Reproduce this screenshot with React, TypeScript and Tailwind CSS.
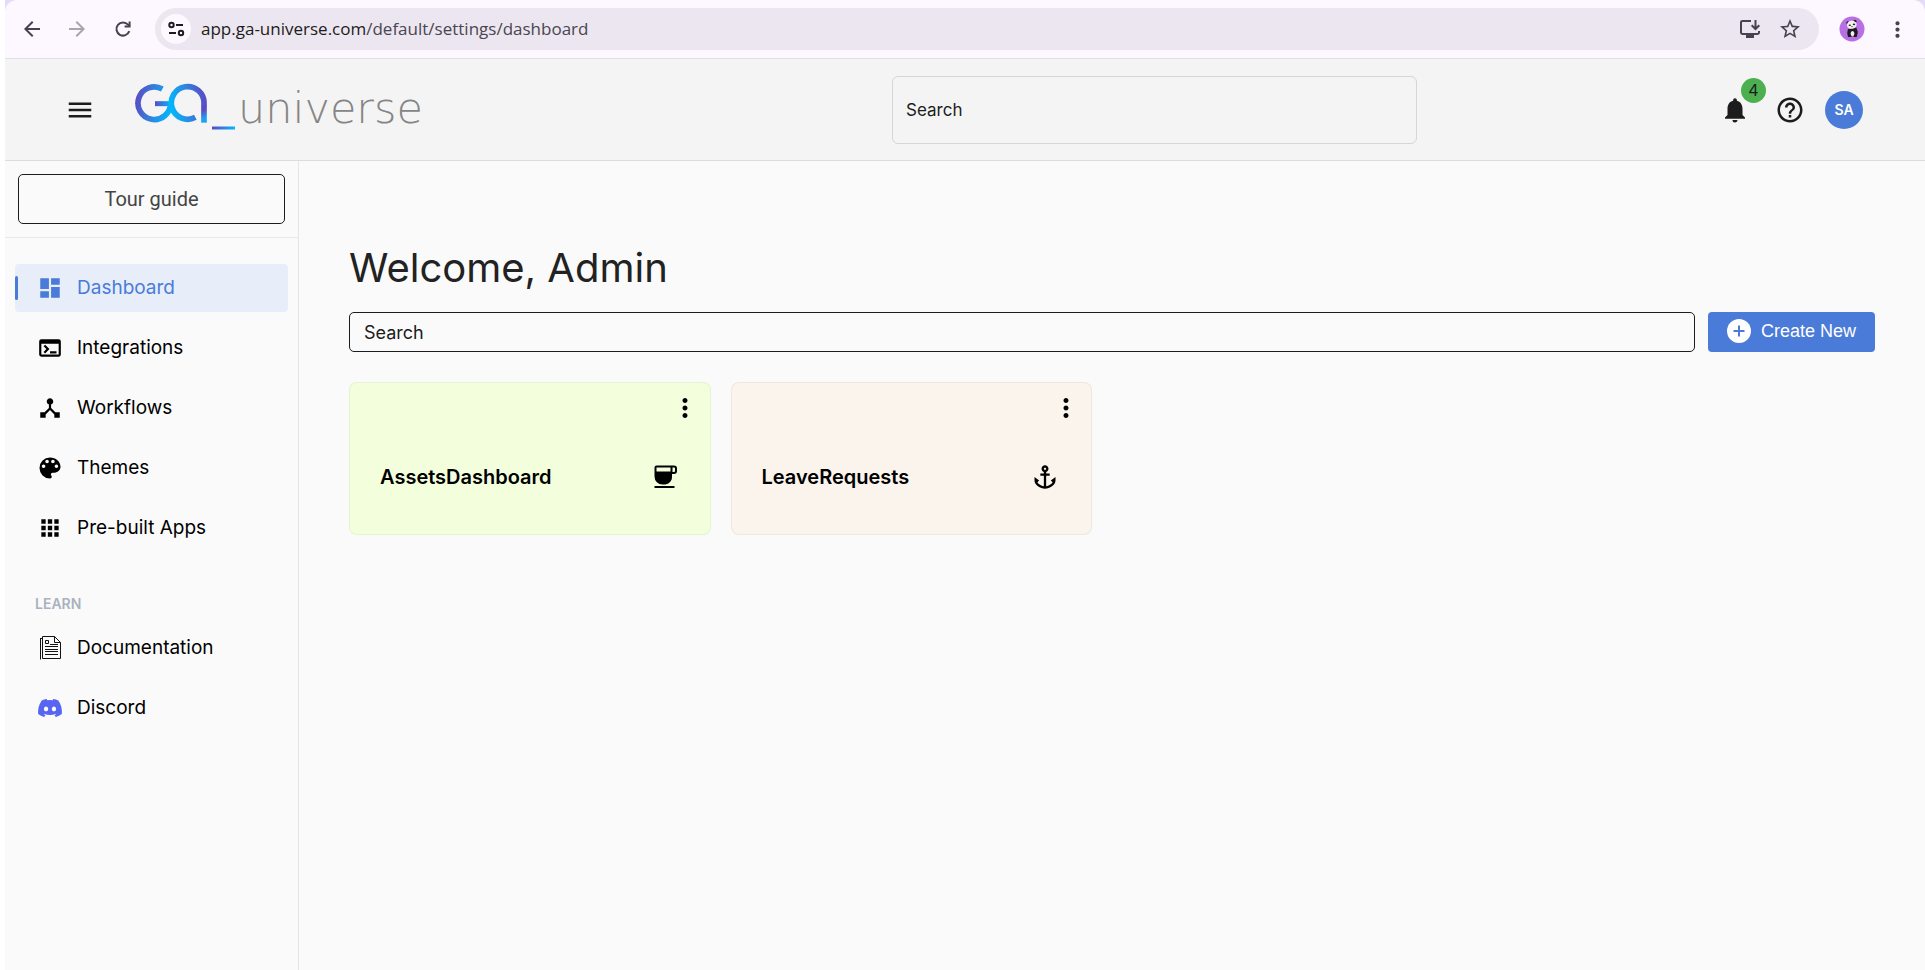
import type { ReactNode } from "react";
import {
  MdAnchor,
  MdApps,
  MdArrowBack,
  MdArrowForward,
  MdColorLens,
  MdDashboard,
  MdDeviceHub,
  MdHelpOutline,
  MdMenu,
  MdMoreVert,
  MdNotifications,
  MdStarBorder,
  MdTerminal,
} from "react-icons/md";
import { FaDiscord } from "react-icons/fa";

function SiteInfoIcon() {
  return (
    <svg width="20" height="20" viewBox="0 0 20 20" fill="none" stroke="#1d1b20" strokeWidth="2" aria-hidden="true">
      <circle cx="5.500" cy="6" r="2.200" />
      <path d="M10 6h7M3 14h7" />
      <circle cx="15" cy="14" r="2.200" />
    </svg>
  );
}

function ReloadIcon() {
  return (
    <svg width="20" height="20" viewBox="0 0 20 20" fill="none" stroke="#49414f" strokeWidth="2" aria-hidden="true">
      <path d="M16.300 12.200A6.600 6.600 0 1 1 15 5.600L16.600 7.400" />
      <path d="M16.600 2.600v5h-5" />
    </svg>
  );
}

function InstallIcon() {
  return (
    <svg width="24" height="24" viewBox="0 0 24 24" fill="none" stroke="#49414f" strokeWidth="2" aria-hidden="true">
      <path d="M13 4H4.400Q3 4 3 5.400v10.200Q3 17 4.400 17h15.200q1.400 0 1.400-1.400V14" />
      <path d="M8 19.500h8" strokeWidth="3" />
      <path d="M17.500 3v8.500M13.700 8.200l3.800 3.800 3.800-3.800" />
    </svg>
  );
}

function PandaAvatar() {
  return (
    <svg width="26" height="26" viewBox="0 0 26 26" aria-hidden="true">
      <circle cx="13" cy="13" r="12.500" fill="#b76fe3" />
      <circle cx="8.800" cy="6.800" r="1.500" fill="#222" />
      <circle cx="16" cy="5.200" r="1.500" fill="#222" />
      <ellipse cx="12.800" cy="8.800" rx="4.900" ry="4" fill="#f2eef0" transform="rotate(-10 12.800 8.800)" />
      <ellipse cx="10.800" cy="9.200" rx="1.200" ry="0.800" fill="#222" />
      <ellipse cx="15" cy="8.400" rx="1.200" ry="0.800" fill="#222" />
      <circle cx="13" cy="10.600" r="0.600" fill="#222" />
      <path d="M9 13q4.500 0.500 8.300-1.500l1.500 4.500-1 5h-3.300v-2h-2v2H9L8.200 17z" fill="#1c1a1d" />
      <ellipse cx="13.500" cy="17.500" rx="1.900" ry="2.600" fill="#f2eef0" />
    </svg>
  );
}

function GaMark() {
  return (
    <svg width="102" height="48" viewBox="42 38 306 144" fill="none" aria-hidden="true">
      <defs>
        <linearGradient id="gaG" x1="45" y1="90" x2="158" y2="110" gradientUnits="userSpaceOnUse">
          <stop offset="0" stopColor="#5b4bc4" />
          <stop offset="0.500" stopColor="#2f86e0" />
          <stop offset="1" stopColor="#00b8ff" />
        </linearGradient>
        <linearGradient id="gaBar" x1="104" y1="0" x2="154" y2="0" gradientUnits="userSpaceOnUse">
          <stop offset="0" stopColor="#5b4bc4" />
          <stop offset="1" stopColor="#00b8ff" />
        </linearGradient>
        <linearGradient id="gaA" x1="150" y1="110" x2="258" y2="90" gradientUnits="userSpaceOnUse">
          <stop offset="0" stopColor="#00b8ff" />
          <stop offset="0.500" stopColor="#2f86e0" />
          <stop offset="1" stopColor="#5b4bc4" />
        </linearGradient>
        <linearGradient id="gaStem" x1="240" y1="110" x2="262" y2="150" gradientUnits="userSpaceOnUse">
          <stop offset="0.300" stopColor="#5b4bc4" />
          <stop offset="0.800" stopColor="#1aa3f5" />
        </linearGradient>
        <linearGradient id="gaLine" x1="276" y1="0" x2="345" y2="0" gradientUnits="userSpaceOnUse">
          <stop offset="0" stopColor="#5b4bc4" />
          <stop offset="1" stopColor="#00b8ff" />
        </linearGradient>
      </defs>
      <path d="M127 56A49 49 0 1 0 152 99" stroke="url(#gaG)" strokeWidth="17" />
      <path d="M105 100H150" stroke="url(#gaBar)" strokeWidth="15" />
      <path d="M226 141A49 49 0 1 1 252 99V108" stroke="url(#gaA)" strokeWidth="17" />
      <path d="M252 106V157" stroke="url(#gaStem)" strokeWidth="17" />
      <path d="M276 173H345" stroke="url(#gaLine)" strokeWidth="9" />
    </svg>
  );
}

function DocumentIcon() {
  return (
    <svg width="24" height="24" viewBox="0 0 24 24" fill="none" stroke="#111" strokeWidth="1" aria-hidden="true">
      <path d="M2.500 2.500v21" />
      <path d="M2 2.500h2" />
      <path d="M4.500 22.500V.5h12l6 6v16z" />
      <path d="M16.500.5v6h6" />
      <path d="M7.500 4.500h3v3h-3z" />
      <path d="M12 8.500h8M7 10.500h13M7 13.500h13M7 15.500h13M7 18.500h13" />
    </svg>
  );
}

function CupIcon() {
  return (
    <svg width="24" height="24" viewBox="0 0 24 24" aria-hidden="true">
      <path
        fillRule="evenodd"
        d="M2.500 0.500H20A3 3 0 0 1 23 3.500V6A3 3 0 0 1 20 9H18V11A7.500 7.500 0 0 1 11.500 19.500H8.500A8 8 0 0 1 0.500 11.500V2.500A2 2 0 0 1 2.500 0.500ZM2.500 2.500V6.500H16.500V2.500ZM18.500 2.500V7H20A1 1 0 0 0 21 6V3.500A1 1 0 0 0 20 2.500Z"
      />
      <path d="M0.500 21H20.500V23H0.500Z" />
    </svg>
  );
}

function AddCircleIcon() {
  return (
    <svg width="24" height="24" viewBox="0 0 24 24" aria-hidden="true">
      <circle cx="12" cy="12" r="12" fill="#fff" />
      <path d="M12 6.500v11M6.500 12h11" stroke="#4a7bd8" strokeWidth="2" />
    </svg>
  );
}

type NavItemProps = { icon: ReactNode; label: string; active?: boolean };

function NavItem({ icon, label, active = false }: NavItemProps) {
  return (
    <li>
      <a
        href="#"
        aria-current={active ? "page" : undefined}
        className={
          active
            ? "flex h-12 items-center rounded bg-[#e7eefa] text-[#4a7bd8]"
            : "flex h-12 items-center rounded text-black"
        }
      >
        <span className={active ? "h-6 w-[3px] rounded-sm bg-[#4a7bd8]" : "h-6 w-[3px]"} />
        <span className="ml-5 flex w-6 justify-center">{icon}</span>
        <span className="ml-[15px] text-[19px]">{label}</span>
      </a>
    </li>
  );
}

type AppCardProps = { title: string; icon: ReactNode; tone: string };

function AppCard({ title, icon, tone }: AppCardProps) {
  return (
    <div className="pr-5">
      <article className={`flex h-[153px] flex-col rounded-lg border border-black/5 ${tone}`}>
        <button type="button" aria-label={`${title} options`} className="mt-[10px] mr-2.5 self-end">
          <MdMoreVert size={30} />
        </button>
        <div className="mt-10 flex items-center justify-between pr-8 pl-[30px]">
          <h2 className="text-xl leading-7 font-semibold">{title}</h2>
          {icon}
        </div>
      </article>
    </div>
  );
}

function BrowserBar() {
  return (
    <div className="bg-[#e4dbf8]">
      <div className="flex h-[59px] items-center rounded-t-xl border-b border-[#e3dde8] bg-[#fdf7ff] pr-[15px] pl-[15px] text-[#49414f]">
        <button type="button" aria-label="Back" className="flex w-6 justify-center">
          <MdArrowBack size={24} />
        </button>
        <button type="button" aria-label="Forward" className="ml-[21px] flex w-6 justify-center text-[#aaa4ae]">
          <MdArrowForward size={24} />
        </button>
        <button type="button" aria-label="Reload" className="ml-6 flex w-5 justify-center">
          <ReloadIcon />
        </button>
        <div className="ml-[22px] flex h-[42px] flex-1 items-center rounded-full bg-[#ece6f0] pr-[17px] pl-1.5">
          <button
            type="button"
            aria-label="Site information"
            className="flex size-[30px] items-center justify-center rounded-full bg-[#fdf7ff]"
          >
            <SiteInfoIcon />
          </button>
          <p className="ml-2.5 flex-1 font-['Open_Sans','Noto_Sans',sans-serif] text-[17px] text-[#49454f]">
            <span className="text-[#1d1b20]">app.ga-universe.com</span>/default/settings/dashboard
          </p>
          <button type="button" aria-label="Install app">
            <InstallIcon />
          </button>
          <button type="button" aria-label="Bookmark" className="ml-4">
            <MdStarBorder size={24} />
          </button>
        </div>
        <button type="button" aria-label="Profile" className="ml-5">
          <PandaAvatar />
        </button>
        <button type="button" aria-label="Browser menu" className="ml-5">
          <MdMoreVert size={25} />
        </button>
      </div>
    </div>
  );
}

function Header() {
  return (
    <header className="flex h-[102px] items-center border-b border-[#dcdcdc] bg-[#f4f4f4] pr-[62px] pl-[60px] text-[#1c1c1c]">
      <div className="flex shrink-0 basis-[46%] items-center">
        <button type="button" aria-label="Toggle menu">
          <MdMenu size={30} />
        </button>
        <a href="#" className="mb-1.5 ml-[39px] flex h-12 items-start">
          <GaMark />
          <span className="ml-0.5 font-['DejaVu_Sans',sans-serif] text-[43px] leading-[50px] font-extralight text-[#858585]">
            universe
          </span>
        </a>
      </div>
      <input
        type="text"
        aria-label="Search the workspace"
        placeholder="Search"
        className="h-[68px] w-[29.2%] rounded-md border border-[#d6d6d6] px-[13px] text-[17px] placeholder:text-[#1c1c1c]"
      />
      <div className="ml-auto flex items-center">
        <button type="button" aria-label="Notifications" className="relative">
          <MdNotifications size={30} />
          <span className="absolute -top-[17px] left-[21px] flex size-[25px] items-center justify-center rounded-full bg-[#4caf50] text-base">
            4
          </span>
        </button>
        <button type="button" aria-label="Help" className="ml-[25px]">
          <MdHelpOutline size={30} />
        </button>
        <button
          type="button"
          aria-label="Account SA"
          className="ml-5 flex size-[38px] items-center justify-center rounded-full bg-[#4a7bd8] text-sm font-semibold text-white"
        >
          SA
        </button>
      </div>
    </header>
  );
}

function Sidebar() {
  return (
    <aside className="w-[294px] shrink-0 border-r border-[#e6e6e6]">
      <div className="border-b border-[#e8e8e8] px-[13px] pt-[13px] pb-[13px]">
        <button
          type="button"
          className="h-[50px] w-full rounded-[5px] border border-[#1c1c1c] font-[Roboto,sans-serif] text-xl text-[#444]"
        >
          Tour guide
        </button>
      </div>
      <nav className="px-2.5 pt-[26px]">
        <ul className="flex flex-col gap-3">
          <NavItem active label="Dashboard" icon={<MdDashboard size={26} className="shrink-0" />} />
          <NavItem label="Integrations" icon={<MdTerminal size={26} className="shrink-0" />} />
          <NavItem label="Workflows" icon={<MdDeviceHub size={26} className="shrink-0" />} />
          <NavItem label="Themes" icon={<MdColorLens size={28} className="shrink-0" />} />
          <NavItem label="Pre-built Apps" icon={<MdApps size={26} className="shrink-0" />} />
        </ul>
        <h2 className="mt-10 pl-5 text-sm leading-6 font-semibold text-[#aab2c0]">LEARN</h2>
        <ul className="mt-2 flex flex-col gap-3">
          <NavItem label="Documentation" icon={<DocumentIcon />} />
          <NavItem label="Discord" icon={<FaDiscord size={26} color="#5865f2" className="shrink-0" />} />
        </ul>
      </nav>
    </aside>
  );
}

export default function App() {
  return (
    <div className="min-h-screen bg-white pl-[5px] font-[Inter,sans-serif]">
      <div className="flex min-h-screen flex-col bg-[#fafafa]">
        <BrowserBar />
        <Header />
        <div className="flex flex-1">
          <Sidebar />
          <main className="flex-1 pt-20 pr-[50px] pl-[50px]">
            <h1 className="text-[40px] leading-[54px] text-[#222]">Welcome, Admin</h1>
            <div className="mt-[17px] flex gap-[13px]">
              <input
                type="text"
                aria-label="Search dashboards"
                placeholder="Search"
                className="h-10 min-w-0 flex-1 rounded-[5px] border border-[#1c1c1c] px-3.5 text-lg placeholder:text-[#1c1c1c]"
              />
              <button
                type="button"
                className="flex h-10 w-[167px] items-center justify-center gap-2.5 rounded bg-[#4a7bd8] pb-0.5 font-['Liberation_Sans',sans-serif] text-lg text-white"
              >
                <AddCircleIcon />
                Create New
              </button>
            </div>
            <section className="mt-[30px] grid grid-cols-4">
              <AppCard title="AssetsDashboard" tone="bg-[#f3ffdc]" icon={<CupIcon />} />
              <AppCard title="LeaveRequests" tone="bg-[#fbf4ed]" icon={<MdAnchor size={28} />} />
            </section>
          </main>
        </div>
      </div>
    </div>
  );
}
